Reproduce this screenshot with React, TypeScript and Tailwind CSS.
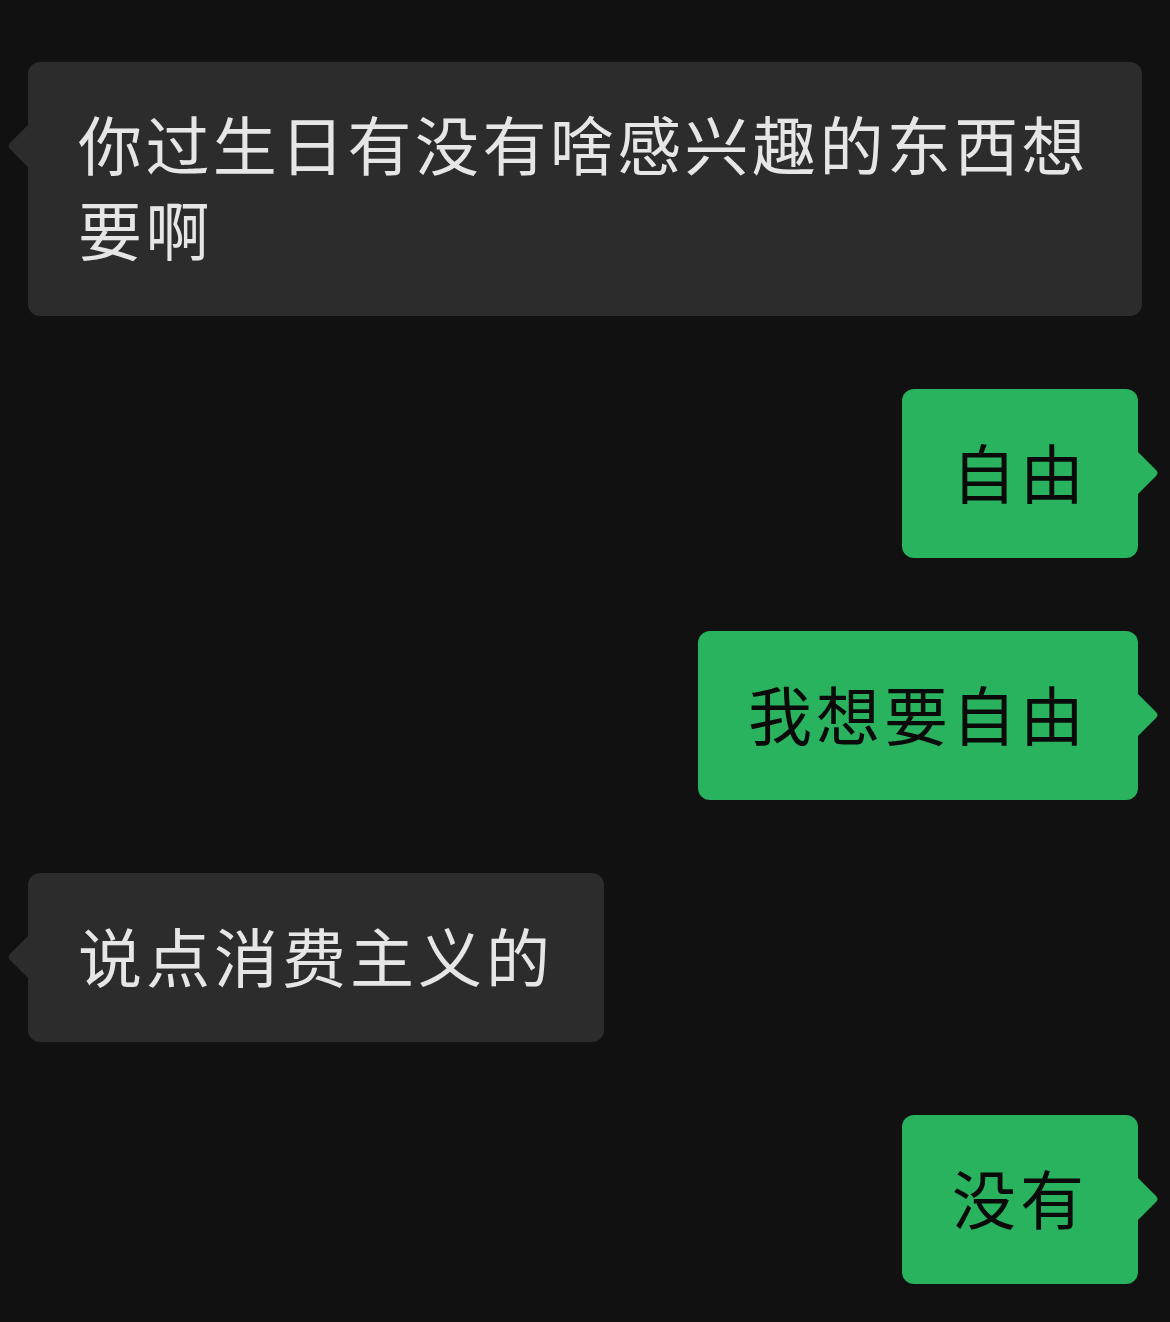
const messages: { side: 'left' | 'right'; text: string; wide?: boolean }[] = [
  { side: 'left', text: '你过生日有没有啥感兴趣的东西想要啊', wide: true },
  { side: 'right', text: '自由' },
  { side: 'right', text: '我想要自由' },
  { side: 'left', text: '说点消费主义的' },
  { side: 'right', text: '没有' },
];

function Tail({ side }: { side: 'left' | 'right' }) {
  if (side === 'left') {
    return (
      <svg
        className="absolute top-[60px] -left-[21px]"
        width="22"
        height="48"
        viewBox="0 0 22 48"
      >
        <path d="M22 2 L3 21 Q0 24 3 27 L22 46 Z" fill="#2c2c2c" />
      </svg>
    );
  }
  return (
    <svg
      className="absolute top-[60px] -right-[21px]"
      width="22"
      height="48"
      viewBox="0 0 22 48"
    >
      <path d="M0 2 L19 21 Q22 24 19 27 L0 46 Z" fill="#29b35f" />
    </svg>
  );
}

function Bubble({ side, text, wide }: { side: 'left' | 'right'; text: string; wide?: boolean }) {
  const left = side === 'left';
  return (
    <div className={left ? 'flex justify-start pl-[28px]' : 'flex justify-end pr-[32px]'}>
      <div
        className={
          left
            ? wide
              ? 'relative w-[1114px] rounded-[12px] bg-[#2c2c2c] text-[#e6e6e6] pt-[38px] pb-[46px] pl-[50px] pr-[40px]'
              : 'relative rounded-[12px] bg-[#2c2c2c] text-[#e6e6e6] pt-[39px] pb-[45px] pl-[50px] pr-[50px]'
            : 'relative rounded-[12px] bg-[#29b35f] text-[#0a0a0a] pt-[39px] pb-[45px] pl-[50px] pr-[50px]'
        }
      >
        <Tail side={side} />
        <p
          className={
            wide
              ? 'text-[64px] leading-[85px] tracking-[3.4px]'
              : 'text-[64px] leading-[85px] tracking-[4px]'
          }
        >
          {text}
        </p>
      </div>
    </div>
  );
}

export default function App() {
  return (
    <div
      className="min-h-[1322px] w-[1170px] bg-[#111111] pt-[62px] pb-[40px] flex flex-col gap-[73px]"
      style={{ fontFamily: '"Noto Sans CJK SC", "Noto Sans", sans-serif' }}
    >
      {messages.map((m, i) => (
        <Bubble key={i} side={m.side} text={m.text} wide={m.wide} />
      ))}
    </div>
  );
}
